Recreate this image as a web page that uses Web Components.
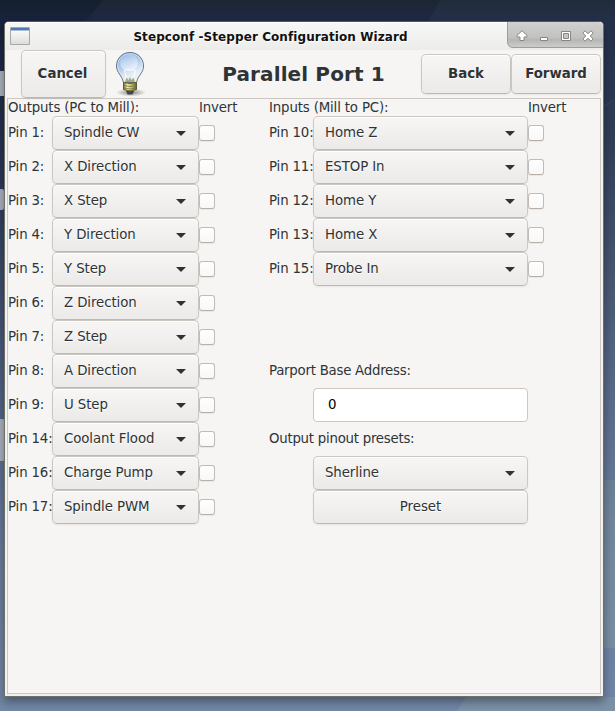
<!DOCTYPE html>
<html lang="en"><head><meta charset="utf-8"><title>Stepconf</title>
<style>
body{margin:0;font:13.333px/16px "DejaVu Sans",sans-serif;color:#2e3436;overflow:hidden}
</style></head><body>
<desk-top></desk-top>
<script>
const define=(name,html,setup)=>customElements.define(name,class extends HTMLElement{
  constructor(){super();this.attachShadow({mode:'open'}).innerHTML=html;}
  connectedCallback(){if(setup)setup(this,this.shadowRoot);}
});

define('push-button',`<style>
:host{display:flex;align-items:center;justify-content:center;box-sizing:border-box;height:34px;border:1px solid #cdc7c2;border-bottom-color:#bfb8b1;border-radius:5px;background:linear-gradient(#f6f5f4 10%,#edebe9 90%);box-shadow:inset 0 1px #fff,0 1px 2px rgba(0,0,0,.07);text-shadow:0 1px #fff;white-space:nowrap}
</style><slot></slot>`);

define('combo-box',`<style>
:host{display:flex;align-items:center;justify-content:space-between;box-sizing:border-box;height:34px;padding:0 12px 0 11px;border:1px solid #cdc7c2;border-bottom-color:#bfb8b1;border-radius:5px;background:linear-gradient(#f6f5f4 10%,#edebe9 90%);box-shadow:inset 0 1px #fff,0 1px 2px rgba(0,0,0,.07);text-shadow:0 1px #fff;white-space:nowrap;letter-spacing:-.09px}
svg{display:block;margin-top:1px}
</style><slot></slot><svg width="10" height="5"><path d="M0 0H10L5 5Z" fill="#2e3436"/></svg>`);

define('check-box',`<style>
:host{display:block;box-sizing:border-box;width:16px;height:16px;border:1px solid #c3bcb6;border-bottom-color:#b8b0a8;border-radius:3px;background:linear-gradient(#fff,#f8f8f7);box-shadow:0 1px 1px rgba(0,0,0,.06)}
</style>`);

define('text-entry',`<style>
:host{display:flex;align-items:center;box-sizing:border-box;height:34px;padding-left:14px;border:1px solid #cdc7c2;border-radius:4px;background:#fff;color:#000}
</style><slot></slot>`);

define('pin-row',`<style>
:host{display:grid;grid-template-columns:44px var(--combo) 16px;height:34px;align-items:center;white-space:nowrap}
span{letter-spacing:-.15px}
</style><span></span><combo-box></combo-box><check-box></check-box>`,(el,r)=>{
  r.querySelector('span').textContent=el.getAttribute('pin');
  r.querySelector('combo-box').textContent=el.getAttribute('signal');
});

define('pin-list',`<style>
:host{display:flex;flex-direction:column}
header{display:grid;grid-template-columns:calc(44px + var(--combo)) auto;box-sizing:border-box;height:17px;padding-top:1px;white-space:nowrap;letter-spacing:-.15px}
</style><header><span></span><span>Invert</span></header><slot></slot>`,(el,r)=>{
  r.querySelector('span').textContent=el.getAttribute('heading');
});

define('port-form',`<style>
:host{display:flex;gap:54px;box-sizing:border-box;height:596px;margin:0 2px;border:1px solid #cdc7c2;background:#f6f5f4}
.out{--combo:147px;width:207px}
.in{--combo:215px}
.side{display:flex;flex-direction:column}
.extra{display:grid;grid-template-columns:44px 215px;grid-auto-rows:34px;align-items:center;margin-top:68px;white-space:nowrap}
.wide{grid-column:1/3;letter-spacing:-.25px}.ctl{grid-column:2}
</style>
<pin-list class="out" heading="Outputs (PC to Mill):">
${[['1','Spindle CW'],['2','X Direction'],['3','X Step'],['4','Y Direction'],['5','Y Step'],['6','Z Direction'],['7','Z Step'],['8','A Direction'],['9','U Step'],['14','Coolant Flood'],['16','Charge Pump'],['17','Spindle PWM']].map(([p,s])=>`<pin-row pin="Pin ${p}:" signal="${s}"></pin-row>`).join('')}
</pin-list>
<div class="side"><pin-list class="in" heading="Inputs (Mill to PC):">
${[['10','Home Z'],['11','ESTOP In'],['12','Home Y'],['13','Home X'],['15','Probe In']].map(([p,s])=>`<pin-row pin="Pin ${p}:" signal="${s}"></pin-row>`).join('')}
</pin-list>
<div class="extra"><span class="wide">Parport Base Address:</span><text-entry class="ctl">0</text-entry><span class="wide">Output pinout presets:</span><combo-box class="ctl">Sherline</combo-box><push-button class="ctl">Preset</push-button></div></div>`);

define('light-bulb',`<style>:host{display:block;width:32px;height:48px}svg{display:block}</style>
<svg width="32" height="48" viewBox="0 0 32 48"><defs>
<linearGradient id="g" x1=".2" y1="0" x2=".6" y2="1"><stop offset="0" stop-color="#7fade6"/><stop offset=".45" stop-color="#b3cdec"/><stop offset=".75" stop-color="#e6eef7"/><stop offset="1" stop-color="#f4f4ee"/></linearGradient>
<linearGradient id="b"><stop offset="0" stop-color="#77733a"/><stop offset=".3" stop-color="#f0edb0"/><stop offset=".6" stop-color="#c4bd62"/><stop offset="1" stop-color="#66622b"/></linearGradient>
<radialGradient id="s"><stop offset="0" stop-color="#000" stop-opacity=".45"/><stop offset="1" stop-color="#000" stop-opacity="0"/></radialGradient>
<linearGradient id="h" x1="0" y1="0" x2=".3" y2="1"><stop offset="0" stop-color="#fff" stop-opacity=".1"/><stop offset="1" stop-color="#fff" stop-opacity=".55"/></linearGradient></defs>
<ellipse cx="17" cy="42.500" rx="15" ry="4" fill="url(#s)"/>
<path d="M12 41H20L18.500 44.500H13.500Z" fill="#44464b"/>
<path d="M16 2.500C8 2.500 2.500 8.500 2.500 16C2.500 23 8 25 9.500 32.500H22.500C24 25 29.500 23 29.500 16C29.500 8.500 24 2.500 16 2.500Z" fill="url(#g)" stroke="#66707f"/>
<path d="M16 3.600C8.800 3.600 3.600 9 3.600 16C3.600 22 9 24.500 10.500 31.500H21.500C23 24.500 28.400 22 28.400 16C28.400 9 23.200 3.600 16 3.600Z" fill="none" stroke="#e4effb" stroke-opacity=".6"/>
<ellipse cx="15" cy="12.500" rx="9" ry="8.500" fill="url(#h)"/>
<path d="M13 30L10.500 20.500L13 19.500L14.500 21L16 19.500L17.500 21L19 19.500L21.500 20.500L19 30" fill="none" stroke="#fff"/>
<path d="M11 32L12.500 27.500L14.500 30L16 27L17.500 30L19.500 27.500L21 32Z" fill="#a8a885"/>
<path d="M9.500 32.500Q16 34.500 22.500 32.500V39.500Q16 42.500 9.500 39.500Z" fill="url(#b)" stroke="#5e5b2b"/>
<path d="M10 35.500Q16 37.500 22 35.500M10 38Q16 40 22 38" fill="none" stroke="#77733c" stroke-width=".8"/>
</svg>`);

define('wizard-header',`<style>
:host{display:grid;grid-template-columns:85px 8px 32px 1fr 90px 90px;align-items:center;height:48px;padding:0 2px 0 16px;font-weight:bold}
.cancel{height:48px;padding-right:2px}.nav{height:40px}
h1{margin:0;font-size:20px;line-height:24px;letter-spacing:.12px;text-align:center;padding-left:40px;white-space:nowrap}
</style><push-button class="cancel">Cancel</push-button><i></i><light-bulb></light-bulb><h1>Parallel Port 1</h1><push-button class="nav">Back</push-button><push-button class="nav">Forward</push-button>`);

define('title-bar',`<style>
:host{display:grid;grid-template-columns:26px 1fr 97px;height:28px;background:linear-gradient(#f7f7f6,#ececea);box-shadow:inset 0 1px #fff;border-radius:4px 4px 0 0}
.app{margin:5px 0 0 5px}
b{font-size:12px;line-height:14px;letter-spacing:.08px;color:#111;text-align:center;padding:8px 0 0 4px;text-shadow:1px 1px #fff;white-space:nowrap}
.buttons{display:block}
</style>
<svg class="app" width="20" height="18"><defs><linearGradient id="w" x2="0" y2="1"><stop stop-color="#fff"/><stop offset="1" stop-color="#dcdedb"/></linearGradient></defs><path d="M.5.5H19.500V17.500H.5Z" fill="url(#w)" stroke="#a6a8a5"/><path d="M1 1H19V3H1Z" fill="#4d78b3"/><path d="M1 3H19V4H1Z" fill="#a7bdd9"/></svg>
<b>Stepconf -Stepper Configuration Wizard</b>
<svg class="buttons" width="97" height="28"><defs><linearGradient id="t" x2="0" y2="1"><stop stop-color="#d0d0d0"/><stop offset=".6" stop-color="#c2c2c1"/><stop offset=".7" stop-color="#b6b6b5"/><stop offset="1" stop-color="#cececc"/></linearGradient></defs>
<path d="M1.500 0H92Q97 0 97 4V25.500H7Q1.500 25.500 1.500 20Z" fill="url(#t)"/><path d="M1.500 0V20Q2 25.500 7 25.500H97" fill="none" stroke="#9d9d9b"/>
<g fill="#fff" stroke="#868684" stroke-linejoin="round">
<path d="M16 8.700L21 13.500V15H18V18.500H14V15H11V13.500Z"/>
<path d="M34.500 15.500H41.500V18.500H34.500Z"/>
<path d="M55.500 9.500H64.500V18.500H55.500Z"/><path d="M57.500 11.500H62.500V16.500H57.500Z" fill="#c6c6c5"/>
<path d="M79 8.800L82 11.800L85 8.800L87.200 11L84.200 14L87.200 17L85 19.200L82 16.200L79 19.200L76.800 17L79.800 14L76.800 11Z"/></g></svg>`);

define('app-window',`<style>
:host{display:block;box-sizing:border-box;width:600px;height:676px;border:1px solid #70706a;border-top-color:#55585a;border-radius:5px 5px 1px 1px;background:#f0efed;box-shadow:0 5px 10px rgba(0,0,0,.35)}
.body{background:#f6f5f4;margin:0 1px;}
wizard-header{margin:0 -1px}
port-form{margin:0 1px}
</style><title-bar></title-bar><div class="body"><wizard-header></wizard-header><port-form></port-form></div>`);

define('desk-top',`<style>
:host{display:grid;box-sizing:border-box;width:615px;height:711px;padding:21px 0 0 4px;position:relative;overflow:hidden}
.bg{position:absolute;inset:0}
app-window{position:relative}
</style><svg class="bg" width="615" height="711"><defs><linearGradient id="d" x2="0" y2="1"><stop stop-color="#151f2d"/><stop offset=".03" stop-color="#18233e"/><stop offset=".2" stop-color="#25324e"/><stop offset=".5" stop-color="#4a5b7b"/><stop offset=".75" stop-color="#66799b"/><stop offset="1" stop-color="#7287a6"/></linearGradient></defs>
<path d="M0 0H615V711H0Z" fill="url(#d)"/>
<path d="M103 0H440L428 22H85Z" fill="#fff" opacity=".03"/><path d="M440 0H615V100L600 109V22H428Z" fill="#cde" opacity=".07"/><path d="M615 99L603 106V480H615Z" fill="#c0c8cc" opacity=".09"/><path d="M603 480H615V648H603Z" fill="#9cb0a8" opacity=".25"/><path d="M466 697H615V711H457Z" fill="#9cb0b0" opacity=".25"/>
<g fill="#a9b0bd"><rect x="-20" y="71" width="30" height="25" rx="4"/><rect x="-27" y="189" width="31" height="21" rx="2"/><rect x="-20" y="419" width="30" height="42" rx="8"/></g></svg>
<app-window></app-window>`);
</script></body></html>
